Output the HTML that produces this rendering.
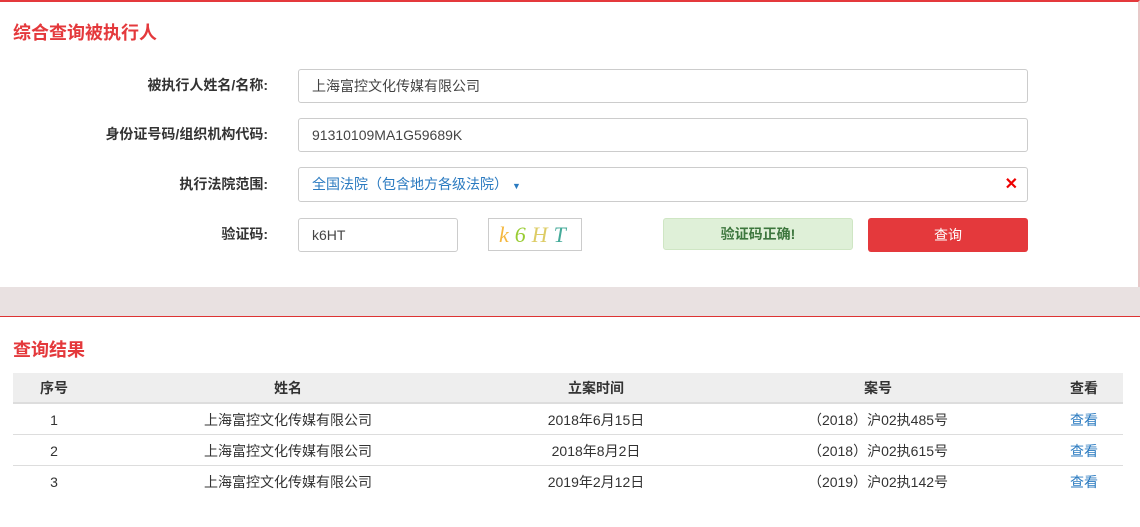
<!DOCTYPE html>
<html><head><meta charset="utf-8"><style>
*{margin:0;padding:0;box-sizing:border-box}
body{width:1140px;height:527px;background:#fff;font-family:"Liberation Sans","Noto Sans CJK SC",sans-serif;font-size:14px;color:#333;position:relative;overflow:hidden}
.top{position:absolute;left:0;top:0;width:1140px;height:287px;border-top:2px solid #e4393c;border-right:2px solid #e8c8c8}
.band{position:absolute;left:0;top:287px;width:1140px;height:30px;background:#e9e1e1;border-bottom:1px solid #d33}
h2{position:absolute;left:13px;color:#e4393c;font-size:18px;font-weight:bold}
.lbl{position:absolute;right:872px;font-weight:bold;font-size:14px;color:#333;line-height:33px}
.in{position:absolute;left:298px;width:730px;height:34px;border:1px solid #ccc;border-radius:3px;line-height:32px;padding-left:13px;font-size:14px;color:#444}
table{position:absolute;left:13px;top:373px;width:1110px;border-collapse:collapse;font-size:14px}
th{background:#eee;height:30px;border-bottom:2px solid #ddd;font-weight:bold;color:#333}
td{height:31px;text-align:center;border-bottom:1px solid #ddd;color:#333;padding-top:2px}
a{color:#2a7ac0;text-decoration:none}
</style></head><body>
<div class="top"></div>
<h2 style="top:19px">综合查询被执行人</h2>
<div class="lbl" style="top:69px">被执行人姓名/名称:</div>
<div class="in" style="top:69px">上海富控文化传媒有限公司</div>
<div class="lbl" style="top:118px">身份证号码/组织机构代码:</div>
<div class="in" style="top:118px">91310109MA1G59689K</div>
<div class="lbl" style="top:168px">执行法院范围:</div>
<div class="in" style="top:167px;height:35px;color:#2a7ac0;font-size:14px">全国法院（包含地方各级法院）<span style="font-size:9px;margin-left:4px">▼</span><span style="position:absolute;right:9px;top:1px;color:#e00;font-weight:bold;font-size:16px">✕</span></div>
<div class="lbl" style="top:218px">验证码:</div>
<div class="in" style="top:218px;width:160px">k6HT</div>
<div style="position:absolute;left:488px;top:218px;width:94px;height:33px;border:1px solid #ccc;font-family:'Liberation Serif',serif;font-style:italic;font-size:22px;line-height:31px;padding-left:10px;letter-spacing:6px"><span style="color:#f5b840">k</span><span style="color:#9c3">6</span><span style="color:#dc6">H</span><span style="color:#4a9">T</span></div>
<div style="position:absolute;left:663px;top:218px;width:190px;height:32px;background:#dff0d8;border:1px solid #cfe6c4;border-radius:3px;text-align:center;line-height:30px;color:#3c763d;font-weight:bold;font-size:14px">验证码正确!</div>
<div style="position:absolute;left:868px;top:218px;width:160px;height:34px;background:#e4393c;border-radius:3px;text-align:center;line-height:34px;color:#fff;font-size:14px">查询</div>
<div class="band"></div>
<h2 style="top:336px">查询结果</h2>
<table>
<tr><th style="width:82px">序号</th><th style="width:386px">姓名</th><th style="width:230px">立案时间</th><th style="width:334px">案号</th><th>查看</th></tr>
<tr><td>1</td><td>上海富控文化传媒有限公司</td><td>2018年6月15日</td><td>（2018）沪02执485号</td><td><a>查看</a></td></tr>
<tr><td>2</td><td>上海富控文化传媒有限公司</td><td>2018年8月2日</td><td>（2018）沪02执615号</td><td><a>查看</a></td></tr>
<tr><td style="border:0">3</td><td style="border:0">上海富控文化传媒有限公司</td><td style="border:0">2019年2月12日</td><td style="border:0">（2019）沪02执142号</td><td style="border:0"><a>查看</a></td></tr>
</table>
</body></html>
